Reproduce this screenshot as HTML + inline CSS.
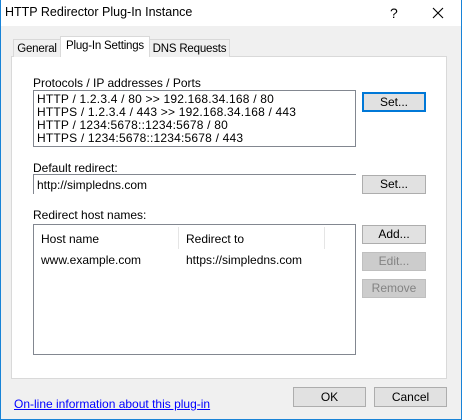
<!DOCTYPE html>
<html><head><style>
*{margin:0;padding:0;box-sizing:border-box}
body{width:462px;height:420px;overflow:hidden;background:#f0f0f0;font:12px "Liberation Sans",sans-serif;color:#000;position:relative}
.a{position:absolute;white-space:nowrap}
.win{position:absolute;left:0;top:0;width:462px;height:420px;border:1px solid #1883d7;border-top:none}
.title{position:absolute;left:0;top:0;width:462px;height:26px;background:#fff}
.btn{position:absolute;background:#e1e1e1;border:1px solid #adadad;text-align:center;line-height:16px}
.dis{color:#838383;background:#cccccc;border-color:#bfbfbf}
.box{position:absolute;background:#fff;border:1px solid #828790}
.tab{font-size:11.5px;letter-spacing:-0.2px;text-align:center}
</style></head><body>
<div class="title"></div>
<div class="win"></div>
<div class="a" style="left:5px;top:5px;font-size:12.5px">HTTP Redirector Plug-In Instance</div>
<div class="a" style="left:390px;top:5px;font-size:14px">?</div>
<svg class="a" style="left:432px;top:7px" width="12" height="12"><path d="M1 1L11 11M11 1L1 11" stroke="#000" stroke-width="1.1"/></svg>
<div class="a" style="left:11px;top:56px;width:436px;height:323px;background:#fff;border:1px solid #d9d9d9"></div>
<div class="a tab" style="left:13px;top:39px;width:48px;height:18px;background:#f0f0f0;border:1px solid #d9d9d9;border-bottom:none;padding-top:3px">General</div>
<div class="a tab" style="left:60px;top:36px;width:90px;height:21px;background:#fff;border:1px solid #d9d9d9;border-bottom:none;padding-top:3px">Plug-In Settings</div>
<div class="a tab" style="left:149px;top:39px;width:81px;height:18px;background:#f0f0f0;border:1px solid #d9d9d9;border-bottom:none;padding-top:3px">DNS Requests</div>
<div class="a" style="left:33px;top:76px">Protocols / IP addresses / Ports</div>
<div class="box" style="left:33px;top:90px;width:323px;height:57px;padding:2px 0 0 3px;line-height:13px;letter-spacing:0.2px">HTTP / 1.2.3.4 / 80 &gt;&gt; 192.168.34.168 / 80<br>HTTPS / 1.2.3.4 / 443 &gt;&gt; 192.168.34.168 / 443<br>HTTP / 1234:5678::1234:5678 / 80<br>HTTPS / 1234:5678::1234:5678 / 443</div>
<div class="btn" style="left:362px;top:92px;width:64px;height:20px;border:2px solid #0078d7;line-height:16px">Set...</div>
<div class="a" style="left:33px;top:161px">Default redirect:</div>
<div class="a" style="left:33px;top:174px;width:323px;height:20px;border-top:1px solid #828790;border-left:1px solid #828790;padding:3px 0 0 3px">http://simpledns.com</div>
<div class="btn" style="left:362px;top:175px;width:64px;height:19px">Set...</div>
<div class="a" style="left:33px;top:208px">Redirect host names:</div>
<div class="box" style="left:33px;top:224px;width:323px;height:131px"></div>
<div class="a" style="left:178px;top:227px;width:1px;height:22px;background:#e5e5e5"></div>
<div class="a" style="left:324px;top:227px;width:1px;height:22px;background:#e5e5e5"></div>
<div class="a" style="left:41px;top:232px">Host name</div>
<div class="a" style="left:186px;top:232px">Redirect to</div>
<div class="a" style="left:41px;top:253px">www.example.com</div>
<div class="a" style="left:186px;top:253px">https://simpledns.com</div>
<div class="btn" style="left:362px;top:225px;width:64px;height:19px">Add...</div>
<div class="btn dis" style="left:362px;top:252px;width:64px;height:19px">Edit...</div>
<div class="btn dis" style="left:362px;top:279px;width:64px;height:19px">Remove</div>
<div class="a" style="left:14px;top:397px;color:#0000ff;text-decoration:underline">On-line information about this plug-in</div>
<div class="btn" style="left:293px;top:387px;width:73px;height:20px;line-height:18px">OK</div>
<div class="btn" style="left:374px;top:387px;width:73px;height:20px;line-height:18px">Cancel</div>
</body></html>
